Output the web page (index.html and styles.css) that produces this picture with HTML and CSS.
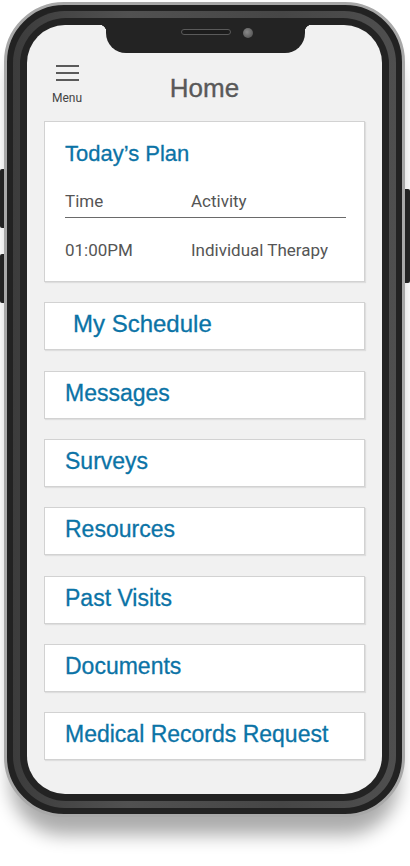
FILE: index.html
```html
<!DOCTYPE html>
<html lang="en">
<head>
<meta charset="utf-8">
<title>Home</title>
<link rel="stylesheet" href="styles.css">
</head>
<body>
<div class="stage">
  <span class="side-btn side-left side-vol-up"></span>
  <span class="side-btn side-left side-vol-down"></span>
  <span class="side-btn side-right side-power"></span>
  <div class="phone">
    <div class="bezel">
      <div class="bezel-inner">
        <div class="screen">
          <div class="notch">
            <span class="speaker"></span>
            <span class="camera"></span>
          </div>
          <header class="header">
            <div class="menu-btn">
              <span class="burger"><i></i><i></i><i></i></span>
              <span class="menu-label">Menu</span>
            </div>
            <h1 class="title">Home</h1>
            <span></span>
          </header>
          <main class="content">
            <section class="card plan">
              <h2 class="plan-title">Today’s Plan</h2>
              <div class="plan-row plan-head">
                <span class="col-time">Time</span>
                <span>Activity</span>
              </div>
              <div class="plan-row plan-data">
                <span class="col-time">01:00PM</span>
                <span>Individual Therapy</span>
              </div>
            </section>
            <a class="card link link-schedule">My Schedule</a>
            <a class="card link">Messages</a>
            <a class="card link">Surveys</a>
            <a class="card link">Resources</a>
            <a class="card link">Past Visits</a>
            <a class="card link">Documents</a>
            <a class="card link">Medical Records Request</a>
          </main>
        </div>
      </div>
    </div>
  </div>
</div>
</body>
</html>
```
FILE: styles.css
```css
html, body {
  margin: 0;
  padding: 0;
  background: #ffffff;
}
body {
  width: 410px;
  height: 866px;
  overflow: hidden;
  font-family: "Liberation Sans", Arial, sans-serif;
}
.stage {
  position: relative;
  width: 410px;
  height: 866px;
  box-sizing: border-box;
  padding: 2px 0 0 4px;
}
.side-btn {
  position: absolute;
  width: 5px;
  background: #262626;
}
.side-left {
  left: 0;
  border-radius: 2px 0 0 2px;
}
.side-right {
  right: 0;
  border-radius: 0 2px 2px 0;
}
.side-vol-up { top: 169px; height: 59px; }
.side-vol-down { top: 254px; height: 49px; }
.side-power { top: 189px; height: 94px; }

.phone {
  position: relative;
  width: 401px;
  height: 815px;
  box-sizing: border-box;
  border: 3px solid #a8a8a8;
  border-radius: 60px;
  background: #222222;
  padding: 6px;
  box-shadow: 0 24px 18px -6px rgba(0, 0, 0, 0.33);
}
.bezel {
  height: 100%;
  box-sizing: border-box;
  border-radius: 52px;
  background: linear-gradient(90deg, #3c3c3c, #515151 30%, #464646 70%, #4f4f4f);
  padding: 7px;
}
.bezel-inner {
  height: 100%;
  box-sizing: border-box;
  border-radius: 46px;
  background: #232323;
  padding: 7px;
}
.screen {
  position: relative;
  height: 100%;
  border-radius: 38px;
  background: #f1f1f1;
  overflow: hidden;
}
.notch {
  position: absolute;
  top: 0;
  left: 79px;
  width: 199px;
  height: 28px;
  background: #232323;
  border-radius: 0 0 20px 20px;
}
.notch::before,
.notch::after {
  content: "";
  position: absolute;
  top: 0;
  width: 7px;
  height: 7px;
}
.notch::before {
  left: -7px;
  background: radial-gradient(circle at 0 100%, transparent 7px, #232323 7.5px);
}
.notch::after {
  right: -7px;
  background: radial-gradient(circle at 100% 100%, transparent 7px, #232323 7.5px);
}
.speaker {
  position: absolute;
  left: 75px;
  top: 4px;
  width: 50px;
  height: 6px;
  box-sizing: border-box;
  border: 1.5px solid #5a5a5a;
  border-radius: 4px;
  background: #1c1c1c;
}
.camera {
  position: absolute;
  left: 137px;
  top: 3px;
  width: 10px;
  height: 10px;
  border-radius: 50%;
  background: radial-gradient(circle at 40% 40%, #8a8a8a, #5c5c5c 70%);
}

.header {
  display: grid;
  grid-template-columns: 1fr auto 1fr;
  align-items: start;
  height: 96px;
  padding: 0 17px;
}
.menu-btn {
  display: flex;
  flex-direction: column;
  align-items: center;
  width: 30px;
  margin: 40px 0 0 8px;
}
.burger {
  display: flex;
  flex-direction: column;
  gap: 5px;
  width: 23px;
}
.burger i {
  display: block;
  height: 2px;
  background: #5a5a5a;
}
.menu-label {
  margin-top: 10px;
  font-family: Roboto, "Liberation Sans", sans-serif;
  font-size: 12px;
  line-height: 14px;
  color: #444444;
}
.title {
  margin: 48px 0 0;
  font-size: 26px;
  line-height: 30px;
  font-weight: normal;
  color: #595959;
  -webkit-text-stroke: 0.35px #595959;
}

.content {
  display: flex;
  flex-direction: column;
  gap: 20.33px;
  padding: 0 17px;
}
.card {
  display: block;
  box-sizing: border-box;
  background: #ffffff;
  border: 1px solid #d2d2d2;
  box-shadow: 1px 1px 1px rgba(0, 0, 0, 0.08);
}
.plan {
  height: 161px;
  padding: 19px 18px 0 20px;
}
.plan-title {
  margin: 0;
  font-size: 22px;
  line-height: 26px;
  font-weight: normal;
  color: #0b73a6;
  -webkit-text-stroke: 0.3px #0b73a6;
}
.plan-row {
  display: flex;
  font-family: Roboto, "Liberation Sans", sans-serif;
  font-size: 17px;
  line-height: 20px;
  color: #555555;
}
.plan-head {
  margin-top: 24px;
  padding-bottom: 6px;
  border-bottom: 1.5px solid #6a6a6a;
}
.plan-data {
  margin-top: 22px;
}
.col-time {
  width: 126px;
}
.link {
  display: flex;
  align-items: center;
  height: 48px;
  padding: 0 0 4px 20px;
  font-size: 23px;
  line-height: 26px;
  color: #0b73a6;
  -webkit-text-stroke: 0.3px #0b73a6;
  text-decoration: none;
}
.link-schedule {
  padding-left: 28px;
  font-size: 24px;
}
```
